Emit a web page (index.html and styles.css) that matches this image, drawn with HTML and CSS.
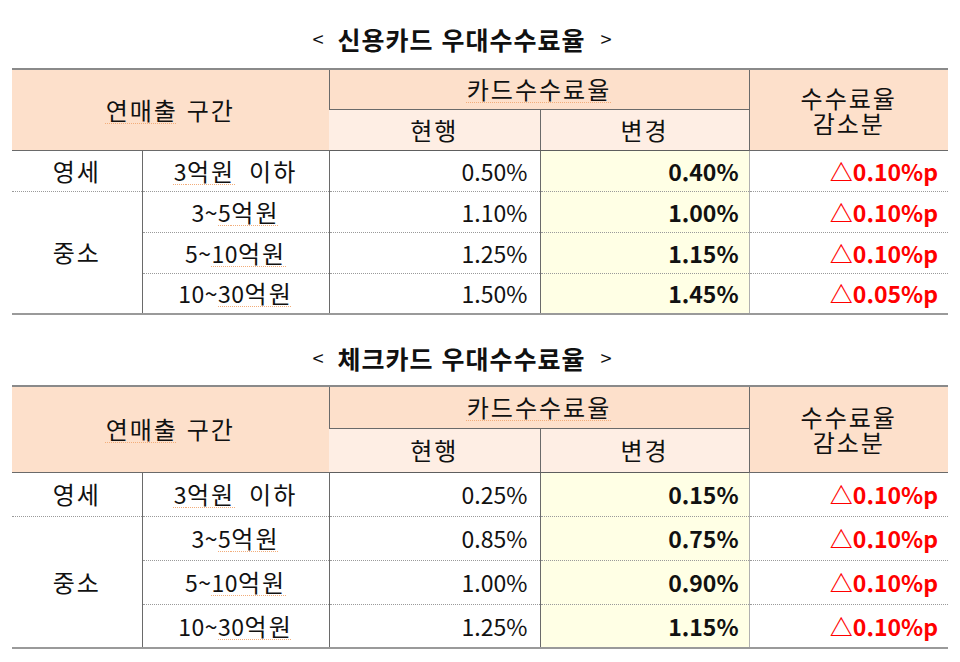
FILE: index.html
```html
<!DOCTYPE html>
<html lang="ko">
<head>
<meta charset="utf-8">
<title>우대수수료율</title>
<link rel="stylesheet" href="styles.css">
</head>
<body>
<div class="page">
  <section class="block block-1">
    <h2 class="title"><span class="br br-l">&lt;</span><span class="tt">신용카드 우대수수료율</span><span class="br br-r">&gt;</span></h2>
    <table class="rates">
      <colgroup>
        <col class="c1"><col class="c2"><col class="c3"><col class="c4"><col class="c5">
      </colgroup>
      <thead>
        <tr class="h1">
          <th colspan="2" rowspan="2" class="hd kr"><span class="sp">연매출</span> 구간</th>
          <th colspan="2" class="hd kr"><span class="sp">카드수수료율</span></th>
          <th rowspan="2" class="hd kr two"><span class="ln">수수료율</span><span class="ln">감소분</span></th>
        </tr>
        <tr class="h2">
          <th class="sub kr">현행</th>
          <th class="sub kr">변경</th>
        </tr>
      </thead>
      <tbody>
        <tr class="first">
          <td class="grp kr">영세</td>
          <td class="range"><span class="sp">3<span class="h">억원</span></span> <span class="h">이하</span></td>
          <td class="num">0.50%</td>
          <td class="new">0.40%</td>
          <td class="diff">△0.10%p</td>
        </tr>
        <tr>
          <td class="grp kr" rowspan="3">중소</td>
          <td class="range">3~<span class="sp">5<span class="h">억원</span></span></td>
          <td class="num">1.10%</td>
          <td class="new">1.00%</td>
          <td class="diff">△0.10%p</td>
        </tr>
        <tr>
          <td class="range">5~<span class="sp">10<span class="h">억원</span></span></td>
          <td class="num">1.25%</td>
          <td class="new">1.15%</td>
          <td class="diff">△0.10%p</td>
        </tr>
        <tr>
          <td class="range">10~<span class="sp">30<span class="h">억원</span></span></td>
          <td class="num">1.50%</td>
          <td class="new">1.45%</td>
          <td class="diff">△0.05%p</td>
        </tr>
      </tbody>
    </table>
  </section>

  <section class="block block-2">
    <h2 class="title"><span class="br br-l">&lt;</span><span class="tt">체크카드 우대수수료율</span><span class="br br-r">&gt;</span></h2>
    <table class="rates">
      <colgroup>
        <col class="c1"><col class="c2"><col class="c3"><col class="c4"><col class="c5">
      </colgroup>
      <thead>
        <tr class="h1">
          <th colspan="2" rowspan="2" class="hd kr"><span class="sp">연매출</span> 구간</th>
          <th colspan="2" class="hd kr"><span class="sp">카드수수료율</span></th>
          <th rowspan="2" class="hd kr two"><span class="ln">수수료율</span><span class="ln">감소분</span></th>
        </tr>
        <tr class="h2">
          <th class="sub kr">현행</th>
          <th class="sub kr">변경</th>
        </tr>
      </thead>
      <tbody>
        <tr class="first">
          <td class="grp kr">영세</td>
          <td class="range"><span class="sp">3<span class="h">억원</span></span> <span class="h">이하</span></td>
          <td class="num">0.25%</td>
          <td class="new">0.15%</td>
          <td class="diff">△0.10%p</td>
        </tr>
        <tr>
          <td class="grp kr" rowspan="3">중소</td>
          <td class="range">3~<span class="sp">5<span class="h">억원</span></span></td>
          <td class="num">0.85%</td>
          <td class="new">0.75%</td>
          <td class="diff">△0.10%p</td>
        </tr>
        <tr>
          <td class="range">5~<span class="sp">10<span class="h">억원</span></span></td>
          <td class="num">1.00%</td>
          <td class="new">0.90%</td>
          <td class="diff">△0.10%p</td>
        </tr>
        <tr>
          <td class="range">10~<span class="sp">30<span class="h">억원</span></span></td>
          <td class="num">1.25%</td>
          <td class="new">1.15%</td>
          <td class="diff">△0.10%p</td>
        </tr>
      </tbody>
    </table>
  </section>
</div>
</body>
</html>
```

FILE: styles.css
```css
html, body {
  margin: 0;
  padding: 0;
  background: #ffffff;
}

body {
  font-family: "Noto Sans CJK KR", "Noto Sans", sans-serif;
  color: #111111;
  width: 960px;
  height: 662px;
  overflow: hidden;
}

.page {
  padding-left: 12px;
  width: 936px;
}

.title {
  margin: 0;
  font-size: 25px;
  font-weight: 700;
  line-height: 30px;
  text-align: center;
  color: #111111;
  display: flex;
  justify-content: center;
  align-items: center;
  padding-right: 36px;
}

.title .tt {
  letter-spacing: 1px;
}

.title .br {
  font-weight: 400;
  font-size: 20px;
}

.title .br-l {
  margin-right: 14px;
}

.title .br-r {
  margin-left: 15px;
}

.block-1 .title {
  padding-top: 24px;
  padding-bottom: 14px;
}

.block-2 .title {
  padding-top: 28px;
  padding-bottom: 12px;
}

.rates {
  width: 936px;
  border-collapse: collapse;
  table-layout: fixed;
  font-size: 23px;
}

.c1 { width: 130px; }
.c2 { width: 187px; }
.c3 { width: 211px; }
.c4 { width: 209px; }
.c5 { width: 199px; }

.rates th,
.rates td {
  padding: 0;
  line-height: 28px;
  white-space: nowrap;
}

.kr,
.range .h {
  font-size: 24px;
  letter-spacing: 2px;
}

.rates thead tr.h1 th {
  border-top: 2px solid #8a8a8a;
}

.rates th {
  font-weight: 400;
  text-align: center;
  vertical-align: middle;
  border-bottom: 1px solid #6a6a6a;
  border-left: 1px solid #6a6a6a;
}

.rates th.hd {
  background: #fde0cb;
}

.rates th.sub {
  background: #feeee4;
}

.rates th:first-child {
  border-left: none;
}

.rates th.two {
  line-height: 25px;
}

.rates th.two .ln {
  display: block;
}

.rates thead tr.h2 th {
  border-bottom: 1px solid #5e5e5e;
}

.block-1 .h1 { height: 40px; }
.block-1 .h2 { height: 41px; }
.block-1 tbody tr { height: 41px; }

.block-2 .h1 { height: 42px; }
.block-2 .h2 { height: 44px; }
.block-2 tbody tr { height: 44px; }

.rates td {
  border-top: 1px dotted #9a9a9a;
  vertical-align: middle;
}

.rates tbody tr.first td {
  border-top: none;
}

.rates tbody tr:last-child td,
.rates td.grp[rowspan] {
  border-bottom: 2px solid #9a9a9a;
}

.grp {
  text-align: center;
}

.range {
  text-align: center;
  letter-spacing: 0.5px;
  word-spacing: 7px;
  border-left: 1px solid #6a6a6a;
}

.num {
  text-align: right;
  padding-right: 12px !important;
  border-left: 1px solid #6a6a6a;
}

.new {
  text-align: right;
  font-weight: 700;
  padding-right: 10px !important;
  background: #ffffe5;
  border-left: 1px solid #6a6a6a;
}

.diff {
  text-align: right;
  font-weight: 700;
  color: #ff0000;
  padding-right: 10px !important;
  border-left: 1px solid #b0b0b0;
}

.sp {
  text-decoration: underline dotted #f2ad7a;
  text-decoration-thickness: 1px;
  text-underline-offset: 3px;
}
```
